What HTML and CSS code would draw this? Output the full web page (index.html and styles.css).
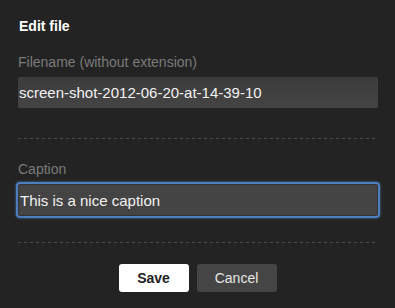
FILE: index.html
```html
<!DOCTYPE html>
<html lang="en">
<head>
    <meta charset="UTF-8">
    <title>Edit file</title>
    <link rel="stylesheet" href="styles.css">
</head>
<body>
    <div class="dialog">
        <h3 class="title">Edit file</h3>
        <form class="edit-form">
            <div class="field">
                <label for="filename">Filename (without extension)</label>
                <input type="text" id="filename" value="screen-shot-2012-06-20-at-14-39-10">
            </div>
            <div class="field">
                <label for="caption">Caption</label>
                <input type="text" id="caption" class="active" value="This is a nice caption">
            </div>
            <div class="actions">
                <button type="button" class="btn btn-save">Save</button>
                <button type="button" class="btn btn-cancel">Cancel</button>
            </div>
        </form>
    </div>
</body>
</html>
```

FILE: styles.css
```css
body {
    margin: 0;
    background-color: #232323;
    font-family: "Liberation Sans", Arial, sans-serif;
    color: #eee;
}
.dialog {
    padding: 16px 17px 0 18px;
}
.title {
    margin: 0;
    font-size: 14px;
    line-height: 20px;
    font-weight: bold;
    color: #fff;
    padding-left: 1px;
}
.field {
    padding: 16px 0 21px;
    background: repeating-linear-gradient(to right, #4d4d4d 0 3px, transparent 3px 6px) left bottom / 100% 1px no-repeat;
}
.field + .field {
    padding-top: 20px;
}
.field label {
    display: block;
    font-size: 14px;
    line-height: 20px;
    color: #7a7a7a;
    margin-bottom: 5px;
}
.field input {
    box-sizing: border-box;
    display: block;
    width: 360px;
    height: 31px;
    margin: 0 0 10px;
    padding: 0 1px;
    border: none;
    border-radius: 2px;
    background: linear-gradient(#3c3c3c, #444);
    font-family: inherit;
    font-size: 15px;
    color: #f2f2f2;
    outline: none;
}
.field input.active {
    height: 32px;
    margin-bottom: 6px;
    background: #444;
    border: 1px solid #333;
    box-shadow: 0 0 0 2px #4c7dbd, 0 0 2px 3px rgba(76, 125, 189, 0.4);
}
.actions {
    display: flex;
    justify-content: center;
    gap: 8px;
    padding-top: 21px;
    margin-left: -1px;
}
.btn {
    height: 28px;
    border: none;
    border-radius: 3px;
    font-family: inherit;
    font-size: 14px;
    cursor: pointer;
}
.btn-save {
    width: 70px;
    background: #fff;
    color: #222;
    font-weight: bold;
}
.btn-cancel {
    width: 80px;
    background: #454545;
    color: #e6e6e6;
}
```
